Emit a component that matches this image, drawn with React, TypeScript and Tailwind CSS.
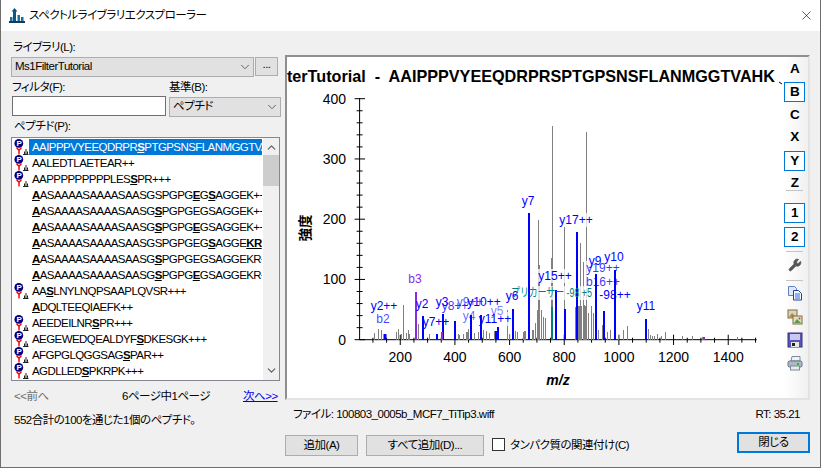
import { ChevronDown, ChevronUp, Wrench, X } from 'lucide-react';

// peptide list, [x] = bold underlined residue
const peptides: { seq: string; lib: boolean }[] = [
  { seq: 'AAIPPPVYEEQDRPR[S]PTGPSNSFLANMGGTVAHK', lib: true },
  { seq: 'AALEDTLAETEAR++', lib: true },
  { seq: 'AAPPPPPPPPPLES[S]PR+++', lib: true },
  { seq: '[A]ASAAAASAAAASAASGSPGPG[E]G[S]AGGEK++', lib: false },
  { seq: '[A]ASAAAASAAAASAASG[S]PGPGEGSAGGEK++', lib: false },
  { seq: '[A]ASAAAASAAAASAASG[S]PGPG[E]GSAGGEK++', lib: false },
  { seq: '[A]ASAAAASAAAASAASGSPGPGEG[S]AGGE[KR]++', lib: false },
  { seq: '[A]ASAAAASAAAASAASG[S]PGPGEGSAGGEKR++', lib: false },
  { seq: '[A]ASAAAASAAAASAASG[S]PGPG[E]GSAGGEKR++', lib: false },
  { seq: 'AA[S]LNYLNQPSAAPLQVSR+++', lib: true },
  { seq: '[A]DQLTEEQIAEFK++', lib: false },
  { seq: 'AEEDEILNR[S]PR+++', lib: true },
  { seq: 'AEGEWEDQEALDYF[S]DKESGK+++', lib: true },
  { seq: 'AFGPGLQGGSAG[S]PAR++', lib: true },
  { seq: 'AGDLLED[S]PKRPK+++', lib: true },
];

// gray peaks as [x, top] in page pixels
const grayPeaks = [
  [374, 333], [378, 329], [381, 330], [396, 332], [398, 329], [401, 334], [403, 305], [406, 333], [408, 330], [409, 334],
  [418, 324], [429, 334], [458, 334], [459, 335], [463, 334], [466, 332], [467, 332], [468, 329], [474, 333], [478, 332],
  [483, 330], [486, 331], [489, 333], [494, 331], [507, 310], [509, 334], [515, 331], [517, 332], [523, 332], [524, 331],
  [525, 331], [532, 330], [533, 330], [535, 323], [537, 310], [538, 220], [539, 265], [541, 310], [543, 317], [545, 318],
  [552, 126], [551, 258], [564, 227], [575, 307], [578, 306], [579, 306], [580, 243], [581, 306], [583, 262], [584, 305],
  [585, 306], [586, 132], [588, 313], [591, 306], [593, 313], [595, 330], [598, 330], [602, 325], [607, 332], [610, 330],
  [618, 335], [623, 330], [627, 326], [648, 329], [650, 335], [652, 336], [654, 336], [657, 334], [661, 336], [665, 332],
  [682, 336], [692, 336], [702, 337], [737, 337],
];

// coloured peaks as [x, top, width, colour]
const ionPeaks: [number, number, number, string][] = [
  [385, 334, 3, '#0000ff'], [423, 316, 2, '#0000ff'], [437, 334, 2, '#0000ff'], [443, 314, 2, '#0000ff'],
  [455, 321, 2, '#0000ff'], [471, 315, 2, '#0000ff'], [481, 315, 2, '#0000ff'], [496, 331, 2, '#0000ff'],
  [498, 327, 2, '#0000ff'], [513, 309, 2, '#0000ff'], [529, 213, 2, '#0000ff'], [556, 290, 2, '#0000ff'],
  [565, 309, 2, '#0000ff'], [577, 232, 2, '#0000ff'], [596, 274, 2, '#0000ff'], [604, 311, 2, '#0000ff'],
  [615, 270, 2, '#0000ff'], [646, 319, 2, '#0000ff'], [416, 292, 2, '#8a2be2'], [442, 332, 2, '#8a2be2'],
  [704, 337, 2, '#8a2be2'], [552, 307, 2, '#008080'],
];

// ion labels as [text, centre x, baseline, colour, opacity]
const ionLabels: [string, number, number, string, number][] = [
  ['y2++', 384, 310, '#0000ff', 1], ['b2', 383, 323, '#0000ff', 0.75], ['b3', 415, 283, '#8a2be2', 1],
  ['y2', 422, 308, '#0000ff', 1], ['y7++', 436, 326, '#0000ff', 1], ['y3', 442, 306, '#0000ff', 1],
  ['y8++', 455, 310, '#0000ff', 0.8], ['y10++', 484, 306, '#0000ff', 1], ['y9++', 470, 306, '#0000ff', 0.7],
  ['y4', 469, 320, '#0000ff', 0.6], ['y5', 497, 315, '#0000ff', 0.5], ['y11++', 495, 323, '#0000ff', 1],
  ['y6', 512, 300, '#0000ff', 1], ['y7', 528, 205, '#0000ff', 1], ['y17++', 576, 224, '#0000ff', 1],
  ['y15++', 555, 280, '#0000ff', 1], ['y9', 595, 265, '#0000ff', 1], ['y10', 614, 261, '#0000ff', 1],
  ['y19++', 603, 272, '#0000ff', 0.8], ['b16++', 603, 286, '#0000ff', 0.8], ['-98++', 615, 299, '#0000ff', 1],
  ['y11', 646, 310, '#0000ff', 1],
];

const baseY = 340;
const mzToX = (mz: number) => 345.6 + mz * 0.2733;
const intensityToY = (v: number) => 339.7 - v * 0.6025;

function PeptideSeq({ seq }: { seq: string }) {
  const parts = seq.split(/(\[[A-Z]+\])/);
  return (
    <>
      {parts.map((p, i) =>
        p.startsWith('[') ? (
          <span key={i} className="font-bold underline">{p.slice(1, -1)}</span>
        ) : (
          <span key={i}>{p}</span>
        )
      )}
    </>
  );
}

function LibIcon() {
  return (
    <svg width="16" height="16" viewBox="0 0 16 16" className="shrink-0">
      <circle cx="5.8" cy="4.4" r="4.4" fill="#000080" />
      <text x="5.8" y="7.4" textAnchor="middle" fontSize="8" fontWeight="bold" fill="#fff">P</text>
      <path d="M3.5 8.5 L6 11.5 L8.5 8.5 M6 11.5 V15.5" fill="none" stroke="#f00000" strokeWidth="1.4" />
      <path d="M10 15.5 H15.5 M11.5 15 V12.5 M13 15 V10 M14.5 15 V12.5" fill="none" stroke="#222" strokeWidth="1" />
    </svg>
  );
}

function WinButton({ children, className }: { children: React.ReactNode; className: string }) {
  return (
    <button className={`flex items-center justify-center bg-[#e1e1e1] border border-[#adadad] text-black ${className}`}>
      {children}
    </button>
  );
}

function ToolLetter({ label, on, className }: { label: string; on?: boolean; className: string }) {
  return (
    <div className={`w-[21px] flex items-center justify-center text-[13.5px] font-bold text-black ${on ? 'border border-[#0078d7] bg-white' : ''} ${className}`}>
      {label}
    </div>
  );
}

function ToolSep({ className }: { className: string }) {
  return <div className={`ml-[2px] w-[17px] h-px bg-[#c4c4c4] ${className}`} />;
}

function CopyIcon() {
  return (
    <svg width="16" height="16" viewBox="0 0 16 16">
      <path d="M1.5 1.5 H7.5 L9.5 3.5 V10.5 H1.5 Z" fill="#dfe8fa" stroke="#5f82c0" />
      <path d="M6.5 5.5 H11.5 L14.5 8.5 V15 H6.5 Z" fill="#f4f7fd" stroke="#1f459c" />
      <path d="M8 9 H13 M8 11 H13 M8 13 H13" stroke="#2f6fd0" strokeWidth="1" />
    </svg>
  );
}

function CopyMetaIcon() {
  return (
    <svg width="16" height="16" viewBox="0 0 16 16">
      <rect x="1" y="1" width="9" height="8" fill="#cfd9c0" stroke="#8a6a3a" />
      <path d="M2 8 L5 4 L9 8 Z" fill="#c08040" />
      <rect x="6" y="7" width="9" height="8" fill="#d5e3c5" stroke="#8a6a3a" />
      <path d="M7 14 L10 10 L14 14 Z" fill="#5f9a4a" />
      <circle cx="12.5" cy="9.5" r="1" fill="#d04040" />
    </svg>
  );
}

function SaveIcon() {
  return (
    <svg width="16" height="16" viewBox="0 0 16 16">
      <rect x="1" y="1" width="14" height="14" fill="#5a55b8" stroke="#34307e" />
      <rect x="3" y="2" width="10" height="6" fill="#c8c8f0" />
      <rect x="4" y="10" width="8" height="5" fill="#e6e6e6" />
      <rect x="5" y="11" width="3" height="3" fill="#222" />
    </svg>
  );
}

function PrintIcon() {
  return (
    <svg width="16" height="16" viewBox="0 0 16 16">
      <path d="M4 6 L5 1.5 H13 L13 6 Z" fill="#f2f2f2" stroke="#7d8a99" />
      <rect x="1" y="6" width="14" height="6" rx="1.5" fill="#aeb8c4" stroke="#66727f" />
      <rect x="3.5" y="11" width="9" height="4" fill="#e8ecf0" stroke="#7d8a99" />
      <rect x="10" y="8" width="2" height="2" fill="#22c022" />
    </svg>
  );
}

function SpectrumPlot() {
  const xMinor = Array.from({ length: 30 }, (_, i) => 100 + i * 50).filter(m => m <= 1500);
  const yMinor = Array.from({ length: 21 }, (_, i) => i * 20);
  return (
    <svg width="497" height="341" viewBox="287 57 497 341" className="block shrink-0 tracking-normal [font-feature-settings:normal]">
      <text x="775" y="82" textAnchor="end" fontSize="16.2" fontWeight="bold" fill="#000" xmlSpace="preserve">
        {'Ms1FilterTutorial  -  AAIPPPVYEEQDRPRSPTGPSNSFLANMGGTVAHK'}
      </text>
      <line x1="779" y1="82" x2="782" y2="84" stroke="#000" />

      {/* y axis */}
      <line x1="359.6" y1="98" x2="359.6" y2="340" stroke="#000" />
      {yMinor.map(v => {
        const major = v % 100 === 0;
        return (
          <line key={v} x1={major ? 354.6 : 356.6} x2={major ? 365 : 362.6} y1={intensityToY(v)} y2={intensityToY(v)} stroke="#000" />
        );
      })}
      {[0, 100, 200, 300, 400].map(v => (
        <text key={v} x="346" y={intensityToY(v) + 5} textAnchor="end" fontSize="14" fill="#000">{v}</text>
      ))}
      <text transform="translate(310 228) rotate(-90)" textAnchor="middle" fontSize="13.5" fontWeight="bold" fill="#000">強度</text>

      {/* x axis */}
      <line x1="359.6" y1="339.7" x2="756.7" y2="339.7" stroke="#000" />
      {xMinor.map(m => {
        const major = m % 200 === 0;
        return (
          <line key={m} x1={mzToX(m)} x2={mzToX(m)} y1={major ? 334.7 : 337.7} y2={major ? 345 : 342.7} stroke="#000" />
        );
      })}
      {[200, 400, 600, 800, 1000, 1200, 1400].map(m => (
        <text key={m} x={mzToX(m)} y="362" textAnchor="middle" fontSize="14" fill="#000">{m}</text>
      ))}
      <text x="558" y="385" textAnchor="middle" fontSize="14" fontWeight="bold" fontStyle="italic" fill="#000">m/z</text>

      {/* peaks */}
      {grayPeaks.map(([x, top], i) => (
        <rect key={i} x={x} y={top} width="1" height={baseY - top} fill="#808080" />
      ))}
      {ionLabels.map(([t, x, y]) => (
        <rect key={`${t}${x}`} x={x - t.length * 3.4} y={y - 11} width={t.length * 6.8} height="14" fill="#fff" fillOpacity="0.75" />
      ))}
      <rect x="511" y="286" width="81" height="14" fill="#fff" fillOpacity="0.75" />
      {ionPeaks.map(([x, top, w, c], i) => (
        <rect key={i} x={x - w / 2} y={top} width={w} height={baseY - top} fill={c} />
      ))}
      {ionLabels.map(([t, x, y, c, o]) => (
        <text key={`${t}${x}`} x={x} y={y} textAnchor="middle" fontSize="12" fill={c} fillOpacity={o}>{t}</text>
      ))}
      <text x="511" y="297" fontSize="12" fill="#008080" textLength="81" lengthAdjust="spacingAndGlyphs">プリカーサー -98 +5</text>
    </svg>
  );
}

export default function App() {
  return (
    <div className="w-[821px] h-[468px] flex flex-col bg-[#f0f0f0] border-x border-b border-[#6e6e6e] text-[11.5px] tracking-[-0.5px] [font-feature-settings:'palt'] text-black overflow-hidden [font-family:'Liberation_Sans','Noto_Sans_CJK_JP',sans-serif]">
      <div className="h-[31px] shrink-0 bg-white flex items-center pl-[8px] pr-[6px]">
        <svg width="16" height="16" viewBox="0 0 16 16" className="shrink-0">
          <path d="M5.5 0 L8.5 3.5 H7 V13 H4 V3.5 H2.5 Z" fill="#0f5688" />
          <path d="M8.5 7 H11 V13 H8.5 Z M12 9 H14.5 V13 H12 Z M1 9 H3.5 V13 H1 Z" fill="#1f6c9e" />
          <path d="M0 13 H16 V15 H0 Z" fill="#103a60" />
        </svg>
        <span className="ml-[4px]">スペクトルライブラリエクスプローラー</span>
        <X size={15} strokeWidth={1} className="ml-auto text-black" />
      </div>

      <div className="flex flex-1 min-h-0">
        {/* left column */}
        <div className="ml-[10px] w-[270px] shrink-0 pt-[7px] flex flex-col">
          <div className="h-[19px] pl-[2px] leading-[18px]">ライブラリ(L):</div>
          <div className="flex h-[20px] gap-[1px]">
            <div className="w-[243px] flex items-center justify-between bg-[#e1e1e1] border border-[#adadad] pl-[3px] pr-[1px]">
              <span>Ms1FilterTutorial</span>
              <ChevronDown size={14} strokeWidth={1.5} className="text-[#555]" />
            </div>
            <WinButton className="w-[23px] h-[19px] pb-[3px]">...</WinButton>
          </div>
          <div className="flex ml-[1px] mt-[2px] gap-[3px]">
            <div className="w-[154px]">
              <div className="h-[17px] leading-[16px]">フィルタ(F):</div>
              <div className="h-[20px] bg-white border border-[#6f6f6f]" />
            </div>
            <div className="w-[112px]">
              <div className="h-[17px] leading-[16px]">基準(B):</div>
              <div className="h-[20px] flex items-center justify-between bg-[#e1e1e1] border border-[#adadad] pl-[3px] pr-[1px] mt-[1px]">
                <span>ペプチド</span>
                <ChevronDown size={14} strokeWidth={1.5} className="text-[#555]" />
              </div>
            </div>
          </div>
          <div className="h-[20px] pl-[3px] leading-[18px]">ペプチド(P):</div>
          <div className="w-[269px] h-[244px] flex bg-white border border-[#828790]">
            <div className="w-[250px] pl-[1px] pt-[1px] shrink-0 overflow-hidden">
              {peptides.map((p, i) => (
                <div key={i} className="flex h-[16px] items-center">
                  <div className="w-[16px] shrink-0">{p.lib && <LibIcon />}</div>
                  <div className={`w-[233px] h-[16px] pl-[3px] leading-[16px] whitespace-nowrap overflow-hidden text-[11.5px] tracking-[-0.57px] ${i === 0 ? 'bg-[#0078d7] text-white' : ''}`}>
                    <PeptideSeq seq={p.seq} />
                  </div>
                </div>
              ))}
            </div>
            <div className="w-[16px] ml-[1px] bg-[#f0f0f0] flex flex-col items-center">
              <ChevronUp size={13} strokeWidth={2.2} className="mt-[3px] text-[#606060]" />
              <div className="w-full h-[31px] mt-[1px] bg-[#cdcdcd]" />
              <ChevronDown size={13} strokeWidth={2.2} className="mt-auto mb-[3px] text-[#606060]" />
            </div>
          </div>
          <div className="flex items-center mt-[8px] h-[16px] pl-[3px]">
            <span className="w-[108px] shrink-0 text-[#6d6d6d]">{'<<前へ'}</span>
            <span className="w-[121px] shrink-0">6ページ中1ページ</span>
            <span className="text-[#0000ee] underline">{'次へ>>'}</span>
          </div>
          <div className="mt-[7px] h-[16px] pl-[3px]">552合計の100を通じた1個のペプチド。</div>
        </div>

        {/* right column */}
        <div className="ml-[4px] w-[525px] shrink-0 flex flex-col">
          <div className="mt-[24px] h-[345px] flex bg-white border-2 border-t-[#8f8f8f] border-l-[#8f8f8f] border-r-[#e3e3e3] border-b-[#e3e3e3]">
            <SpectrumPlot />
            <div className="w-[24px] shrink-0 flex flex-col bg-gradient-to-r from-white to-[#f0f0f0]">
              <ToolLetter label="A" className="h-[20px] mt-[2px]" />
              <ToolLetter label="B" on className="h-[20px] mt-[3px]" />
              <ToolLetter label="C" className="h-[20px] mt-[3px]" />
              <ToolLetter label="X" className="h-[20px] mt-[2px]" />
              <ToolLetter label="Y" on className="h-[20px] mt-[4px]" />
              <ToolLetter label="Z" className="h-[13px] mt-[6px]" />
              <ToolSep className="mt-0" />
              <ToolLetter label="1" on className="h-[20px] mt-[12px]" />
              <ToolLetter label="2" on className="h-[20px] mt-[4px]" />
              <ToolSep className="mt-[4px]" />
              <div className="w-[21px] h-[16px] mt-[5px] flex items-center justify-center">
                <Wrench size={14} strokeWidth={1.5} className="text-[#555] fill-[#555]" />
              </div>
              <ToolSep className="mt-[7px]" />
              <div className="w-[21px] h-[16px] mt-[4px] flex justify-center"><CopyIcon /></div>
              <div className="w-[21px] h-[16px] mt-[8px] flex justify-center"><CopyMetaIcon /></div>
              <div className="w-[21px] h-[16px] mt-[7px] flex justify-center"><SaveIcon /></div>
              <div className="w-[21px] h-[16px] mt-[7px] flex justify-center"><PrintIcon /></div>
            </div>
          </div>
          <div className="flex justify-between mt-[6px] h-[16px] pl-[8px] pr-[10px] leading-[16px]">
            <span>ファイル: 100803_0005b_MCF7_TiTip3.wiff</span>
            <span>RT: 35.21</span>
          </div>
          <div className="flex mt-[10px] items-start">
            <WinButton className="w-[73px] h-[21px] mt-[3px]">追加(A)</WinButton>
            <WinButton className="w-[118px] h-[21px] mt-[3px] ml-[8px]">すべて追加(D)...</WinButton>
            <div className="w-[13px] h-[13px] mt-[6px] ml-[8px] bg-white border border-[#333]" />
            <span className="ml-[5px] mt-[5px]">タンパク質の関連付け(C)</span>
            <WinButton className="ml-auto w-[73px] h-[21px] !border-2 !border-[#0078d7]">閉じる</WinButton>
          </div>
        </div>
      </div>
    </div>
  );
}
